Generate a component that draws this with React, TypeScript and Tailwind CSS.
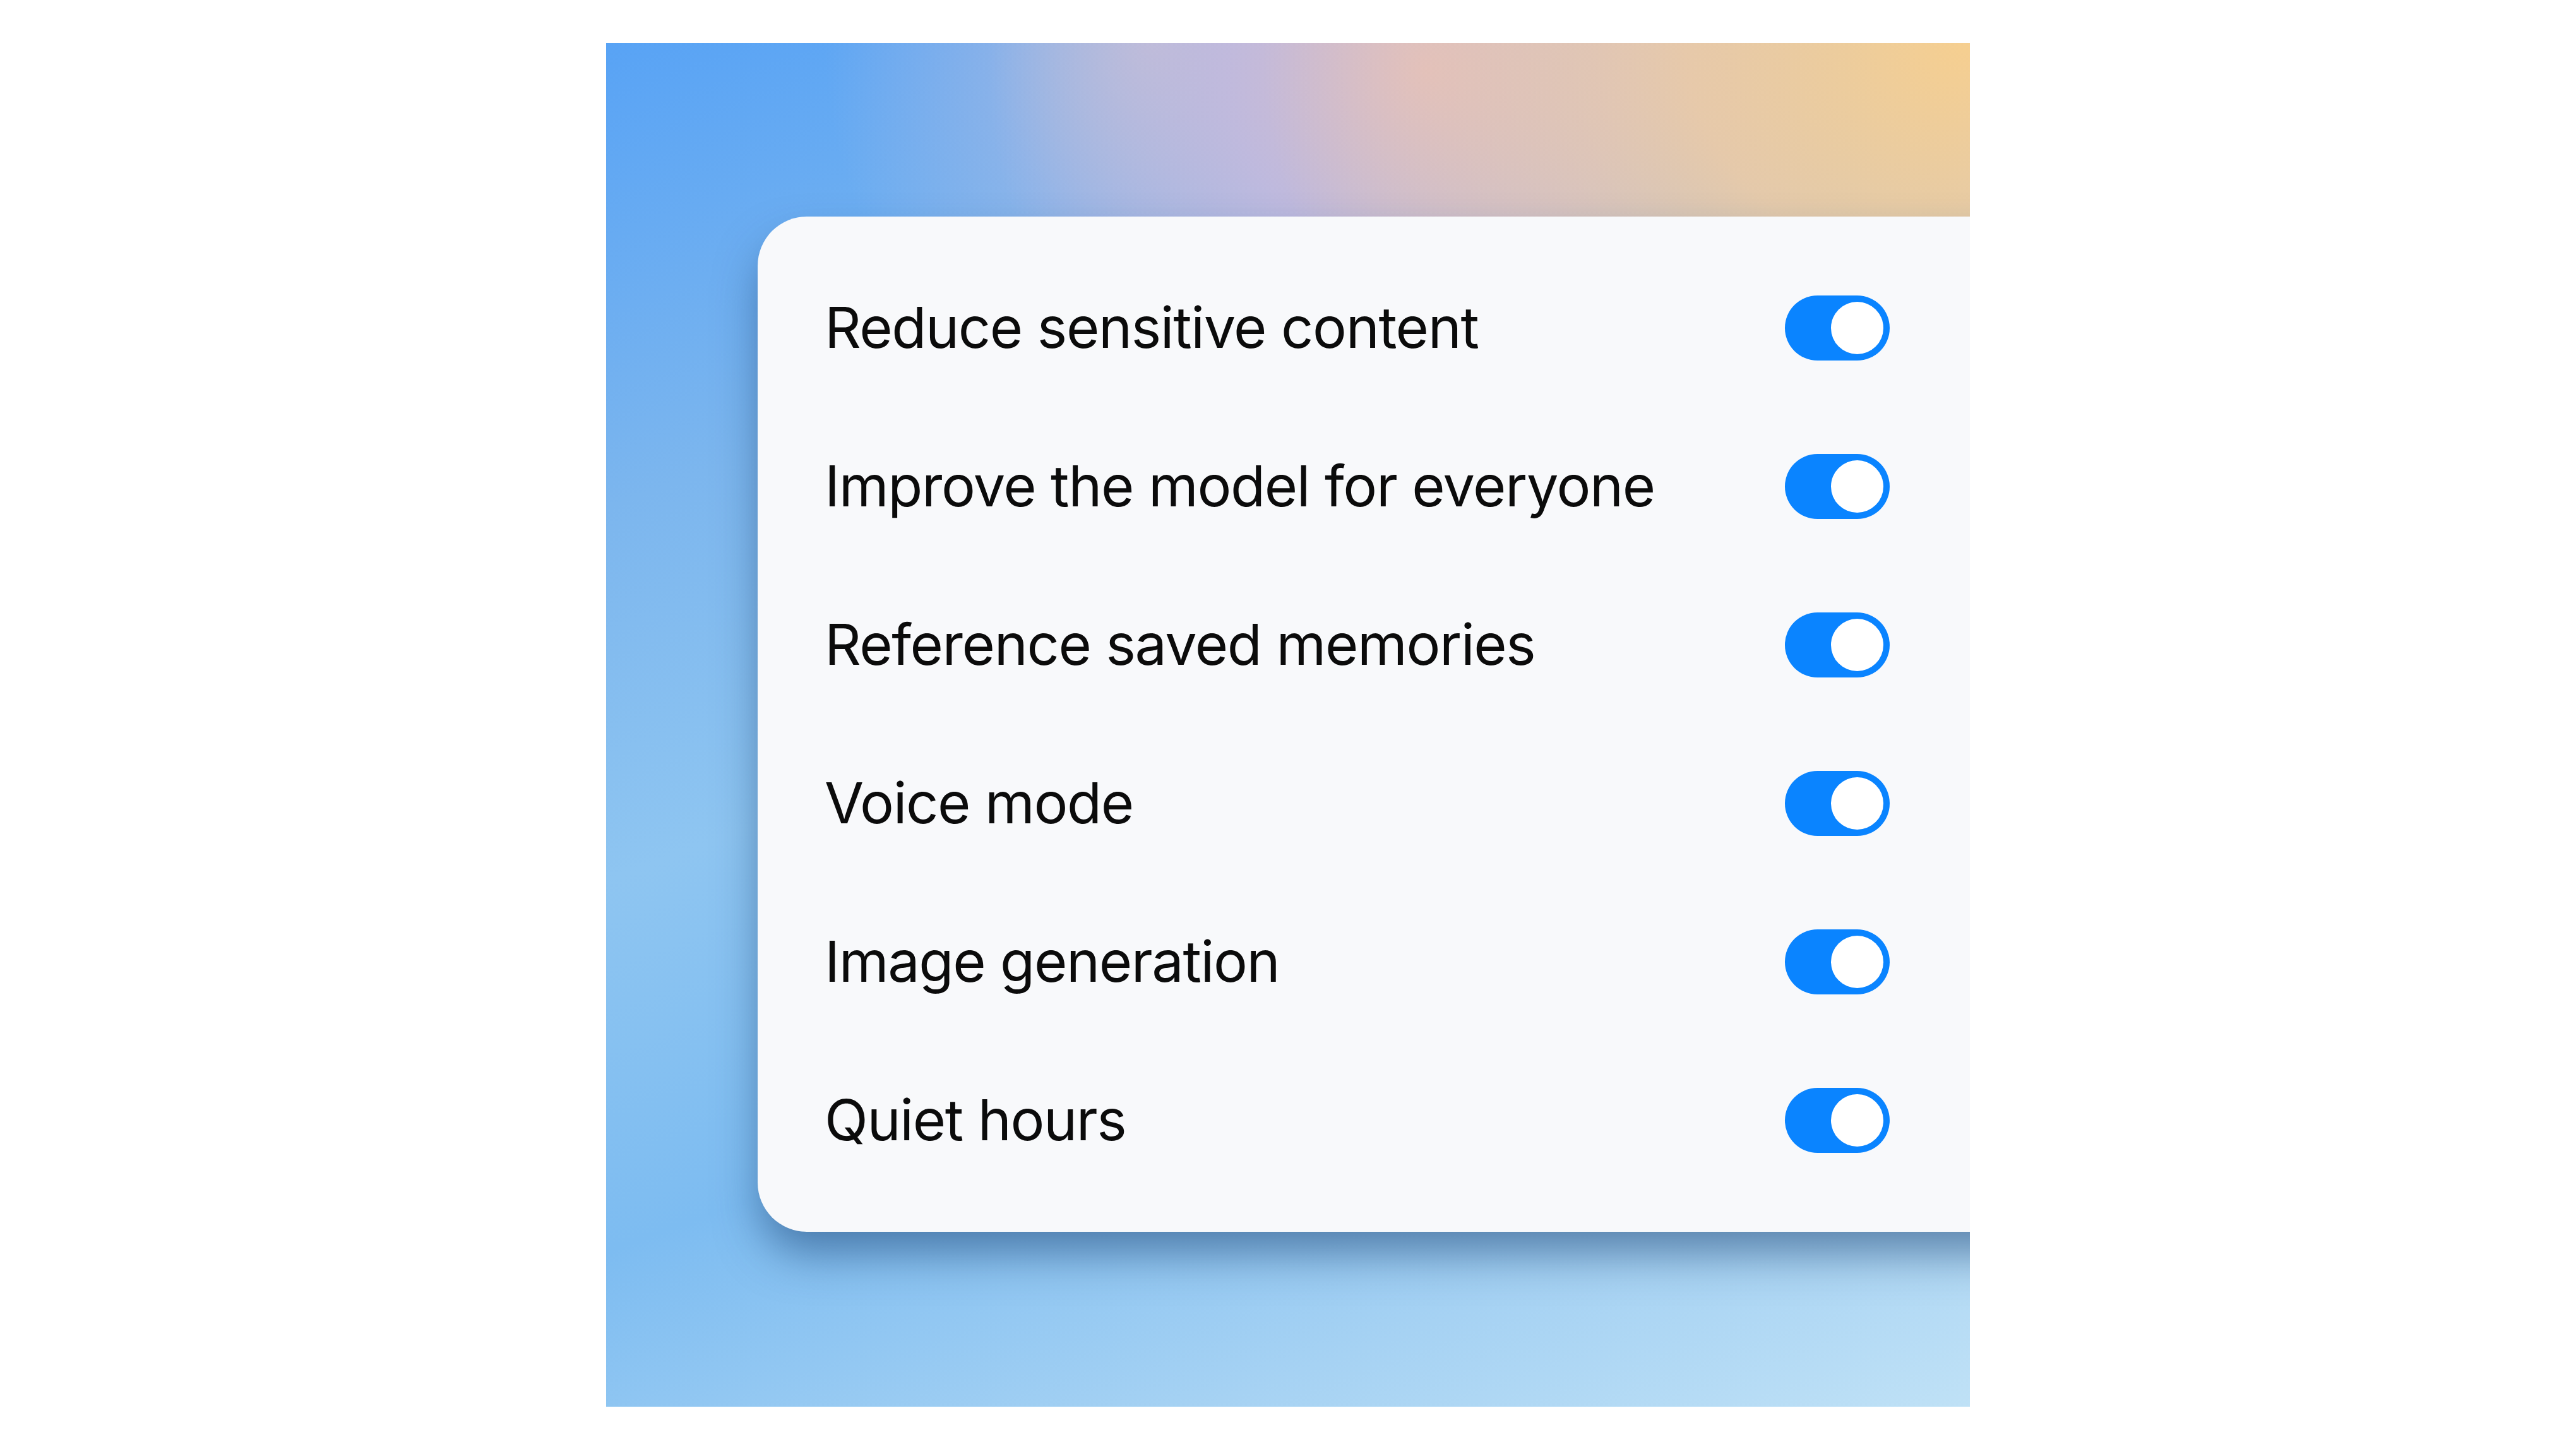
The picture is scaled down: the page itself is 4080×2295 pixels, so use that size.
const settings = [
  "Reduce sensitive content",
  "Improve the model for everyone",
  "Reference saved memories",
  "Voice mode",
  "Image generation",
  "Quiet hours",
];

function Toggle() {
  return (
    <div className="w-[166px] h-[103px] rounded-full bg-[#0a84ff] p-[10px] flex justify-end items-center shrink-0">
      <div className="size-[83px] rounded-full bg-white" />
    </div>
  );
}

export default function App() {
  return (
    <div className="w-full h-[2295px] bg-white flex items-center justify-center">
      {/* Gradient canvas */}
      <div className="w-[2160px] h-[2160px] overflow-hidden pl-[240px] pt-[275px] bg-[radial-gradient(ellipse_52%_42%_at_100%_0%,#f6cf90_0%,rgba(242,204,160,0.85)_40%,rgba(242,204,160,0)_100%),radial-gradient(ellipse_32%_32%_at_60%_2%,#dcbcc6_0%,rgba(198,186,220,0.85)_45%,rgba(198,186,220,0)_100%),radial-gradient(ellipse_24%_28%_at_40%_0%,rgba(190,192,212,0.9)_0%,rgba(170,185,225,0.5)_50%,rgba(170,185,225,0)_100%),linear-gradient(160deg,#58a3f5_0%,#7cb6ee_25%,#8ec5f1_45%,#7dbcf1_65%,#a6d2f3_85%,#bfe1f6_100%)]">
        <div className="w-[2100px] h-[1608px] rounded-[78px] bg-[#f8f9fb] shadow-[0_40px_70px_-6px_rgba(25,65,115,0.55)] pl-[106px] pt-[51px]">
          {settings.map((label) => (
            <div
              key={label}
              className="w-[1687px] h-[251px] flex items-center justify-between"
            >
              <span className="font-['Inter',sans-serif] text-[90px] tracking-[-1.4px] text-[#0b0b0b] leading-none">
                {label}
              </span>
              <Toggle />
            </div>
          ))}
        </div>
      </div>
    </div>
  );
}
